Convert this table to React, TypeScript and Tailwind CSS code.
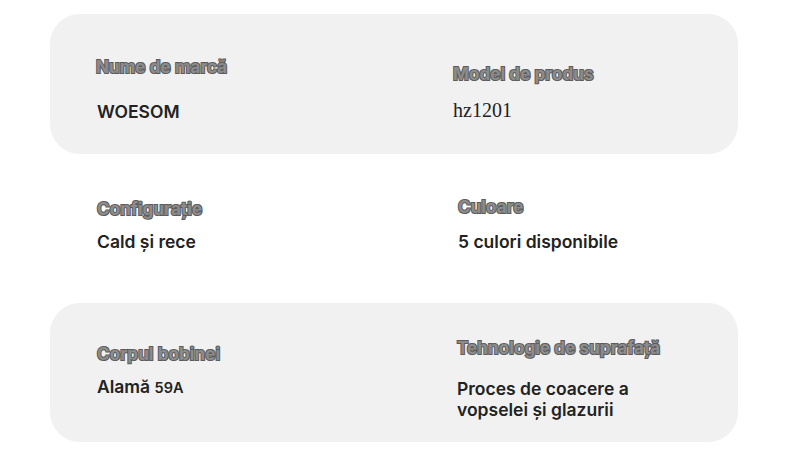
import React from "react";

const labelCls =
  "font-['Inter','Noto_Sans',sans-serif] font-bold text-[17px] leading-[22px] tracking-[0.1px] text-[#8c8c8c] [-webkit-text-stroke:2px_#5c5c5c] [paint-order:stroke_fill] whitespace-nowrap";
const valueCls =
  "font-['Inter','Noto_Sans',sans-serif] font-semibold text-[17.5px] leading-[21px] text-[#222222]";

export default function App() {
  return (
    <div className="w-[790px] h-[465px] bg-white overflow-hidden">
      <div className="ml-[50px] w-[688px] pt-[14px] flex flex-col">
        {/* Row 1 */}
        <div className="h-[140px] rounded-[30px] bg-[#f1f1f1] grid grid-cols-[356px_1fr] pl-[46px]">
          <div className="flex flex-col pt-[42px] gap-[23px]">
            <div className={labelCls}>Nume de marcă</div>
            <div className={`${valueCls} pl-[1px]`}>WOESOM</div>
          </div>
          <div className="flex flex-col pt-[49px] gap-[14px] pl-[1px]">
            <div className={labelCls}>Model de produs</div>
            <div className="font-['Liberation_Serif',serif] text-[20px] leading-[22px] text-[#222222]">
              hz1201
            </div>
          </div>
        </div>
        {/* Row 2 */}
        <div className="h-[149px] grid grid-cols-[356px_1fr] pl-[47px]">
          <div className="flex flex-col pt-[44px] gap-[11px]">
            <div className={labelCls}>Configurație</div>
            <div className={valueCls}>Cald și rece</div>
          </div>
          <div className="flex flex-col pt-[42px] gap-[13px] pl-[5px]">
            <div className={labelCls}>Culoare</div>
            <div className={valueCls}>5 culori disponibile</div>
          </div>
        </div>
        {/* Row 3 */}
        <div className="h-[139px] rounded-[30px] bg-[#f1f1f1] grid grid-cols-[356px_1fr] pl-[47px]">
          <div className="flex flex-col pt-[40px] gap-[11px]">
            <div className={labelCls}>Corpul bobinei</div>
            <div className={valueCls}>
              Alamă <span className="text-[14.5px]">59A</span>
            </div>
          </div>
          <div className="flex flex-col pt-[34px] gap-[19px] pl-[4px]">
            <div className={labelCls}>Tehnologie de suprafață</div>
            <div className={valueCls}>
              Proces de coacere a
              <br />
              vopselei și glazurii
            </div>
          </div>
        </div>
      </div>
    </div>
  );
}
